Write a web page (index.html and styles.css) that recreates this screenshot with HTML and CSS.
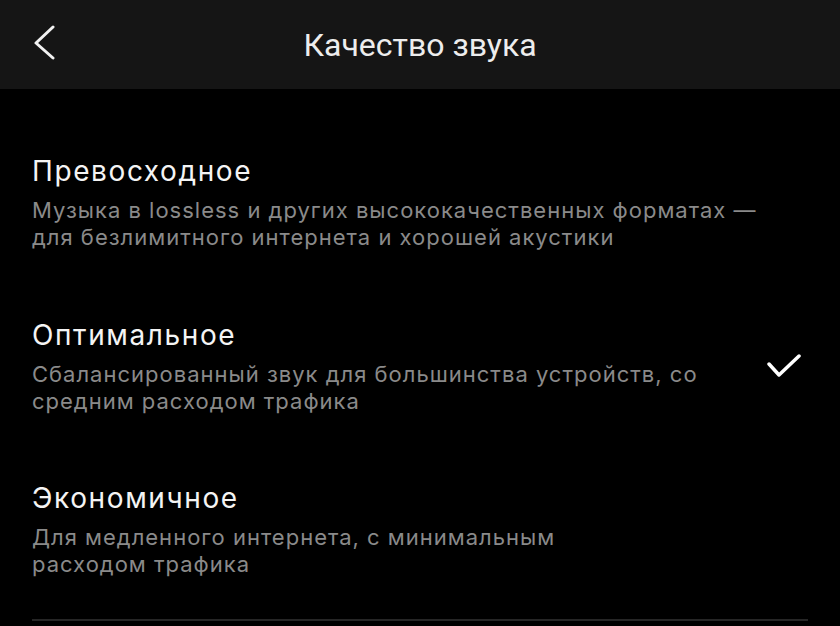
FILE: index.html
```html
<!DOCTYPE html>
<html lang="ru">
<head>
<meta charset="UTF-8">
<title>Качество звука</title>
<link rel="stylesheet" href="styles.css">
</head>
<body>
<div class="topbar">
  <button class="back" aria-label="Назад">
    <svg width="24" height="36" viewBox="0 0 24 36"><path d="M19 2 L2 18 L19 33" fill="none" stroke="#f2f2f2" stroke-width="3" stroke-linecap="round" stroke-linejoin="round"/></svg>
  </button>
  <div class="topbar-title">Качество звука</div>
</div>

<div class="options">
  <div class="option">
    <div class="option-text">
      <div class="option-name">Превосходное</div>
      <div class="option-desc">Музыка в lossless и других высококачественных форматах —<br>для безлимитного интернета и хорошей акустики</div>
    </div>
  </div>
  <div class="option selected">
    <div class="option-text">
      <div class="option-name">Оптимальное</div>
      <div class="option-desc">Сбалансированный звук для большинства устройств, со<br>средним расходом трафика</div>
    </div>
    <svg class="check" width="36" height="26" viewBox="0 0 36 26"><path d="M3 10 L13 21 L33 2" fill="none" stroke="#fff" stroke-width="3.5" stroke-linecap="round" stroke-linejoin="round"/></svg>
  </div>
  <div class="option">
    <div class="option-text">
      <div class="option-name">Экономичное</div>
      <div class="option-desc">Для медленного интернета, с минимальным<br>расходом трафика</div>
    </div>
  </div>
  <div class="divider"></div>
</div>
</body>
</html>
```

FILE: styles.css
```css
body {
  margin: 0;
  background: #000;
  color: #f2f2f2;
  font-family: Inter, Roboto, "Noto Sans", sans-serif;
  height: 626px;
  overflow: hidden;
}

.topbar {
  position: relative;
  height: 89px;
  background: #151515;
  display: flex;
  align-items: center;
  justify-content: center;
}
.back {
  position: absolute;
  left: 34px;
  top: 25px;
  padding: 0;
  border: 0;
  background: none;
}
.topbar-title {
  font-family: Roboto, sans-serif;
  font-size: 32px;
  color: #ededed;
}

.options {
  padding: 0 32px;
}
.option {
  display: flex;
  align-items: center;
  padding-top: 67.5px;
}
.option:first-child {
  padding-top: 66px;
}
.option-text {
  flex: 1;
}
.option-name {
  font-size: 28px;
  line-height: 32px;
  letter-spacing: 1.6px;
  color: #f4f4f4;
}
.option-desc {
  margin-top: 10px;
  font-size: 22px;
  line-height: 27px;
  letter-spacing: 1px;
  color: #8a8a8a;
}
.check {
  margin-right: 6px;
}
.divider {
  margin-top: 41px;
  height: 2px;
  background: #262626;
}
```
